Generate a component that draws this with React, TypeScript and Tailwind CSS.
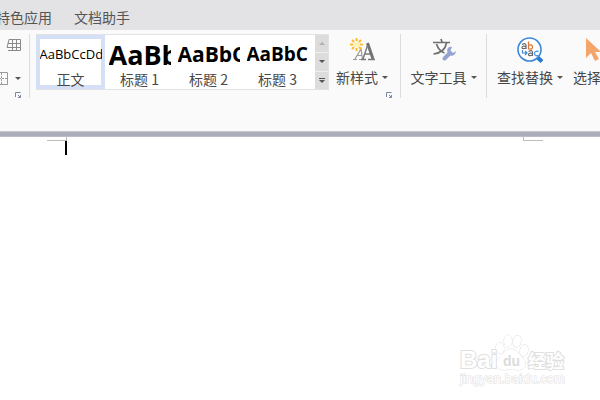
import type { ReactNode } from 'react';

const styles = [
  { sample: 'AaBbCcDd', label: '正文', look: 'text-[13px] font-normal', active: true },
  { sample: 'AaBb', label: '标题 1', look: 'text-[27px] font-bold', active: false },
  { sample: 'AaBbC', label: '标题 2', look: 'text-[21px] font-bold', active: false },
  { sample: 'AaBbC', label: '标题 3', look: 'text-[19px] font-bold', active: false },
];

function Caret({ up = false, light = false }: { up?: boolean; light?: boolean }) {
  return (
    <svg width="6" height="3" viewBox="0 0 6 3" className={light ? 'text-[#b0b0b0]' : 'text-[#555]'} aria-hidden="true">
      <path d={up ? 'M0 3h6L3 0z' : 'M0 0h6L3 3z'} fill="currentColor" />
    </svg>
  );
}

function Launcher({ label }: { label: string }) {
  return (
    <button aria-label={label} className="flex h-[6px] w-[6px]">
      <svg width="6" height="6" viewBox="0 0 6 6" fill="none" stroke="#7b86a5">
        <path d="M.5 5V.5H5.500M3 5.500h2.500V3M3 3l2 2" />
      </svg>
    </button>
  );
}

function Tool({ icon, label, menu = true }: { icon: ReactNode; label: string; menu?: boolean }) {
  return (
    <button className="flex shrink-0 flex-col items-center">
      <span className="flex h-8 items-center">{icon}</span>
      <span className="flex h-[22px] items-center gap-1 whitespace-nowrap">
        {label}
        {menu && <Caret />}
      </span>
    </button>
  );
}

function Divider() {
  return <div className="h-16 w-px shrink-0 bg-[#dcdcde]" />;
}

function NewStyleIcon() {
  return (
    <svg width="26" height="26" viewBox="0 0 26 26" fill="none" aria-hidden="true">
      <path d="M4 22.500h4M10 22.500h4M6 22l6-10 1.500 10M8 18.500h5" stroke="#9a9a9a" strokeWidth="1.200" />
      <path d="M12 22.500h5M19 22.500h7M14 22l5-15M15.500 17h7" stroke="#7a7a7a" strokeWidth="1.400" />
      <path d="M18.500 6l5.500 16" stroke="#727272" strokeWidth="3" />
      <path d="M7.500 1v3M7.500 11v3M1 7.500h3M11 7.500h3M3 3l2 2M10 10l2 2M12 3l-2 2M3 12l2-2" stroke="#fdbb30" strokeWidth="2" />
      <circle cx="7.500" cy="7.500" r="3" fill="#fff1b5" />
    </svg>
  );
}

function TextToolIcon() {
  return (
    <svg width="24" height="24" viewBox="0 0 24 24" fill="none" aria-hidden="true">
      <path d="M1 4.500h17M9 1l1 3M4.500 6c2 6 5 8 8 9M14.500 5c-1 6-6 10-13 11" stroke="#707070" strokeWidth="1.700" />
      <path d="M12.500 20.500l5-5" stroke="#94a3d0" strokeWidth="4" strokeLinecap="round" />
      <path d="M20 9c-4-1-6 3-4 6 1 4 7 4 8-2l-3 2-2.500-2.500z" fill="#94a3d0" />
    </svg>
  );
}

function FindIcon() {
  return (
    <svg width="27" height="27" viewBox="0 0 27 27" fill="none" aria-hidden="true">
      <path d="M20 20l5 4.500" stroke="#2878d0" strokeWidth="4" />
      <circle cx="12.500" cy="12.500" r="11.500" fill="#fff" stroke="#3e87d5" strokeWidth="1.600" />
      <path d="M5 7.500q4-2 4 1v3.500M9 9.500q-4-1-4 1t4 .5" stroke="#666" strokeWidth="1.200" />
      <path d="M11.500 4.500v8M11.500 8.500q4-2 4 1.500t-4 1.500" stroke="#df7935" strokeWidth="1.300" />
      <path d="M11.500 14.500q4-2 4 1v3.500M15.500 16.500q-4-1-4 1t4 .5" stroke="#666" strokeWidth="1.200" />
      <path d="M21.500 14.500q-4-1-4 2t4 2" stroke="#4a9aec" strokeWidth="1.300" />
      <path d="M5.500 13v3H10M8 14l2 2-2 2" stroke="#3e87d5" strokeWidth="1.200" />
    </svg>
  );
}

function Watermark() {
  return (
    <svg className="absolute right-[32px] bottom-[12px]" width="110" height="56" viewBox="0 0 110 56" fill="#fff" stroke="#e0e0e0" role="img" aria-label="Baidu 经验">
      <g fontFamily="Liberation Sans, Noto Sans CJK SC, sans-serif" fontWeight="bold" paintOrder="stroke">
        <text x="2" y="36" fontSize="24" strokeWidth="2">Bai</text>
        <path d="M53 17c5 0 7 4 11 8 5 4 5 13-4 13-3 0-5-1-7-1s-4 1-7 1c-9 0-9-9-4-13 4-4 6-8 11-8z" />
        <ellipse cx="42" cy="16" rx="4" ry="5.500" transform="rotate(-12 42 16)" />
        <ellipse cx="50" cy="9" rx="4" ry="6" />
        <ellipse cx="59" cy="9.500" rx="4" ry="6" transform="rotate(12 59 9.500)" />
        <ellipse cx="66" cy="18.500" rx="4" ry="6" transform="rotate(12 66 18.500)" />
        <text x="45" y="34" fontSize="14" fill="#dcdcdc" stroke="none">du</text>
        <text x="70" y="36" fontSize="18" strokeWidth="2">经验</text>
        <text x="2" y="51" fontSize="13" fontWeight="normal" strokeWidth="1">jingyan.baidu.com</text>
      </g>
    </svg>
  );
}

export default function App() {
  return (
    <div className="relative flex min-h-screen flex-col overflow-hidden bg-white font-['Noto_Sans_CJK_SC',sans-serif] text-[14px] leading-5 text-[#484848]">
      <nav className="flex h-[30px] items-center gap-[22px] bg-[#e3e3e6] pt-1 text-[#555]">
        <button className="-ml-1 whitespace-nowrap">特色应用</button>
        <button className="whitespace-nowrap">文档助手</button>
      </nav>

      <header className="flex h-[101px] items-start overflow-hidden bg-[#fafafa] pt-1">
        <div className="flex h-16 w-[29px] shrink-0 flex-col items-end justify-between">
          <button aria-label="表格" className="mt-1 mr-2">
            <svg width="15" height="14" viewBox="0 0 15 14" fill="none" stroke="#8a8a8a">
              <path d="M3 1.500h11.500v11H3M2 5.500h12M1 9.500h13M6.500 1v12M10.500 1v12M3 1.500l-2 8M2 12.500h2" />
            </svg>
          </button>
          <button aria-label="边框" className="mt-3 flex items-center gap-[7px] pr-2">
            <svg width="13" height="13" viewBox="0 0 13 13" fill="none" stroke="#999">
              <path d="M.5.5h12v12H.5z" />
              <path d="M6.500 1v11M1 6.500h11" strokeDasharray="2 1" />
            </svg>
            <Caret />
          </button>
          <div className="pr-2">
            <Launcher label="段落设置" />
          </div>
        </div>
        <Divider />

        <section aria-label="样式" className="ml-[6px] flex h-14 shrink-0 border border-l-0 border-[#e2e2e5] bg-white">
          {styles.map((s) => (
            <button
              key={s.label}
              className={`flex w-[69px] flex-col items-center border-4 ${s.active ? 'border-[#d5e0f6]' : 'border-transparent'}`}
            >
              <span className={`flex h-[30px] w-[62px] shrink-0 items-center overflow-hidden whitespace-nowrap font-['Open_Sans',sans-serif] leading-none text-black ${s.look}`}>
                {s.sample}
              </span>
              <span className="whitespace-nowrap">{s.label}</span>
            </button>
          ))}
          <div className="ml-[3px] flex w-[13px] flex-col gap-px bg-[#efeff0]">
            <button aria-label="向上" className="flex flex-1 items-center justify-center bg-[#dcdcdd]"><Caret up light /></button>
            <button aria-label="向下" className="flex flex-1 items-center justify-center bg-[#dcdcdd]"><Caret /></button>
            <button aria-label="更多样式" className="flex flex-1 flex-col items-center justify-center gap-px bg-[#dcdcdd]">
              <span className="h-px w-[6px] bg-[#555]" />
              <Caret />
            </button>
          </div>
        </section>

        <div className="ml-[7px] flex h-16 w-[64px] shrink-0 flex-col items-start justify-between">
          <Tool icon={<NewStyleIcon />} label="新样式" />
          <div className="self-end pr-2"><Launcher label="样式设置" /></div>
        </div>
        <Divider />
        <div className="flex w-[85px] shrink-0 justify-center">
          <Tool icon={<TextToolIcon />} label="文字工具" />
        </div>
        <Divider />
        <div className="ml-[10px] flex shrink-0 gap-[10px]">
          <Tool icon={<FindIcon />} label="查找替换" />
          <Tool
            icon={
              <svg width="28" height="26" viewBox="0 0 28 26" aria-hidden="true">
                <path d="M13 1v20l5-5 4 8 4-2-4-7h6z" fill="#f3a56a" />
              </svg>
            }
            label="选择"
            menu={false}
          />
        </div>
      </header>

      <div className="h-[6px] border-y border-t-[#c5c7ce] border-b-[#b9bbc5] bg-[#abadba]" />

      <main className="flex flex-1 items-start justify-between pr-[57px] pl-[47px]">
        <div className="flex flex-col items-end">
          <div className="h-1 w-5 border-r border-b border-[#bebebe]" />
          <div className="h-[14px] w-[2px] bg-black" />
        </div>
        <div className="h-1 w-5 border-b border-l border-[#bebebe]" />
      </main>
      <Watermark />
    </div>
  );
}
